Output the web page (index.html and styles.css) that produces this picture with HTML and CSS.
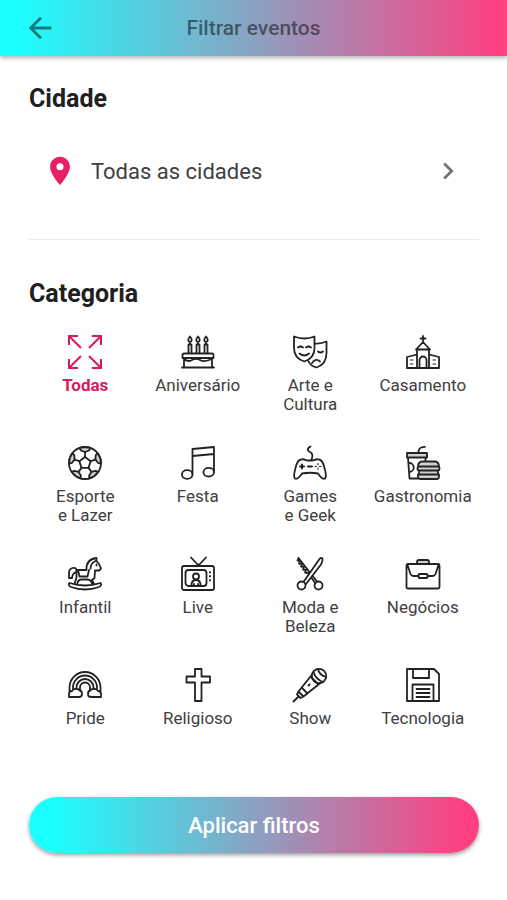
FILE: index.html
```html
<!DOCTYPE html>
<html lang="pt-BR">
<head>
<meta charset="utf-8">
<meta name="viewport" content="width=device-width, initial-scale=1">
<title>Filtrar eventos</title>
<link rel="stylesheet" href="styles.css">
</head>
<body>
<header class="topbar">
  <button class="back" type="button" aria-label="Voltar"><svg class="glyph" viewBox="0 0 24 24"><path d="M20 11H7.83l5.59-5.59L12 4l-8 8 8 8 1.41-1.41L7.83 13H20v-2z"/></svg></button>
  <h1 class="title">Filtrar eventos</h1>
</header>
<main class="content">
  <section class="city">
    <h2 class="heading">Cidade</h2>
    <button class="picker" type="button">
      <svg class="glyph pin" viewBox="0 0 24 24"><path d="M12 2C8.13 2 5 5.13 5 9c0 5.25 7 13 7 13s7-7.75 7-13c0-3.87-3.13-7-7-7zm0 9.500a2.500 2.500 0 0 1 0-5 2.500 2.500 0 0 1 0 5z"/></svg>
      <span class="picker-label">Todas as cidades</span>
      <svg class="glyph chevron" viewBox="0 0 24 24"><path d="M10 6 8.590 7.410 13.170 12l-4.580 4.590L10 18l6-6z"/></svg>
    </button>
  </section>
  <section class="categories">
    <h2 class="heading">Categoria</h2>
    <div class="grid">
      <button class="cat selected" type="button">
        <svg class="icon" viewBox="0 0 34 34"><path d="M1 10V1h9M1 1l12 12M24 1h9v9M33 1 21 13M1 24v9h9M1 33l12-12M24 33h9v-9M33 33 21 21"/></svg>
        <span>Todas</span>
      </button>
      <button class="cat" type="button">
        <svg class="icon" viewBox="0 0 34 34"><path d="M1 32.500h32M3 32V23M31 32V23M3 18.500h28q1.500 0 1.500 1.500v3h-31v-3q0-1.500 1.500-1.500zM3 24q4 3.500 8 1t8 0 12-1M7.500 18.500v-9h3v9M15.500 18.500v-9h3v9M23.500 18.500v-9h3v9M9 9V7M17 9V7M25 9V7M9 1.500q-3.500 4 0 5.500 3.500-1.500 0-5.500zM17 1.500q-3.500 4 0 5.500 3.500-1.500 0-5.500zM25 1.500q-3.500 4 0 5.500 3.500-1.500 0-5.500z"/></svg>
        <span>Aniversário</span>
      </button>
      <button class="cat" type="button">
        <svg class="icon" viewBox="0 0 34 34"><path d="M1 1.500q10.500 4 20.500 0V13c0 7-4 11.500-10.200 13.500C5 24.500 1 20 1 13zM22 8.500q6 .5 11.500-2V18c0 8-4 12.500-10 14.500-4-1-7-3.500-8.500-7M5 12.500q2.500-2 5 0M13 12.500q2.500-2 5 0M6.500 18.500q4.700 4 9.500 0M25 16.500q2.500 2 5 0M19 28q4-5.500 8-1.500"/></svg>
        <span>Arte e<br>Cultura</span>
      </button>
      <button class="cat" type="button">
        <svg class="icon" viewBox="0 0 34 34"><path d="M17 1v6M14.500 3.500h5M17 7l-6 6.500V33M17 7l6 6.500V33M10 14.500h14M11 19.500 1 22v11h32V22l-10-2.500M13.500 33v-8a3.500 3.500 0 0 1 7 0v8"/><path class="thin" d="M4.500 25h2.500M4.500 29h2.500M27 25h2.500M27 29h2.500"/></svg>
        <span>Casamento</span>
      </button>
      <button class="cat" type="button">
        <svg class="icon" viewBox="0 0 34 34"><circle cx="17" cy="17" r="16"/><g id="panel"><path class="shade" d="M11.500 2l1.500 2.500 4 1.500 4-1.500L22.500 2 17 1z"/><path d="M17 6V11L22.700 15.200"/></g><use href="#panel" transform="rotate(72 17 17)"/><use href="#panel" transform="rotate(144 17 17)"/><use href="#panel" transform="rotate(216 17 17)"/><use href="#panel" transform="rotate(288 17 17)"/></svg>
        <span>Esporte<br>e Lazer</span>
      </button>
      <button class="cat" type="button">
        <svg class="icon" viewBox="0 0 34 34"><path d="M11.500 28V3L33 1v25M11.500 10 33 8"/><ellipse cx="6.200" cy="28.500" rx="5.300" ry="4.300"/><ellipse cx="27.700" cy="26.200" rx="5.300" ry="4.300"/></svg>
        <span>Festa</span>
      </button>
      <button class="cat" type="button">
        <svg class="icon" viewBox="0 0 34 34"><path d="M17.500.5c-4 2-3 4.500-.5 5.500s3 4 1.500 8M8 13.500c-3.500.5-4.500 4-5.500 8.500-1 4-2.500 8.500-.5 10.500 2.500 1.500 5-2 7-5q8-1.500 16 0c2 3 4.500 6.500 7 5 2-2 .5-6.500-.5-10.500-1-4.500-2-8-5.500-8.500-4-1-4 1-7 1h-4c-3 0-3-2-7-1z"/><path class="bold" d="M9 18.500v4M7 20.500h4M15 20.500h4"/><path class="thin" d="M25 17.500v1.500M25 22v1.500M22 20.500h1.500M26.500 20.500h1.500"/></svg>
        <span>Games<br>e Geek</span>
      </button>
      <button class="cat" type="button">
        <svg class="icon" viewBox="0 0 34 34"><path d="M19 .8q-5 0-6 3l-1 3.500M2 11.500 3.500 32.500H12M19.500 11.500V15M3 17a4.500 4.500 0 0 1 .5 9"/><path class="shade" d="M1 7h20v4.500H1zM12 20.500q0-5 5-5h11q5 0 5 5zM13 20.500h19q1.500 0 1.500 2t-1.500 2H13q-1.500 0-1.500-2t1.500-2zM13 24.500h19v4H13zM12 28.500h21v2q0 2.500-2.500 2.500h-16q-2.500 0-2.500-2.500z"/></svg>
        <span>Gastronomia</span>
      </button>
      <button class="cat" type="button">
        <svg class="icon" viewBox="0 0 34 34"><path d="M1.500 26q15.500 5 31 0 2 2-1.500 4-14 5-28 0-3.500-2-1.500-4zM6.500 27l2-6.500V14q0-4-4-3Q1 12 1 16v5h3q0-4 4.500-6.500M9 13h9.500c-.5-7 2-11 10-12v3l2.500 3 2 4.500-1.500 2h-4.500l-.5 7.500-2.500 2 2 4M22.500 11.500c0-4 2-6 5-7.500M10 13l1.500 6.500h8l1.500-6.500M9.500 26.500q0-3.500 4-4h6q4 .5 4.500 4M28.500 7.500v1"/></svg>
        <span>Infantil</span>
      </button>
      <button class="cat" type="button">
        <svg class="icon" viewBox="0 0 34 34"><path d="m10 .5 7.500 8 7.500-8M14.500 9q3-3 6 0"/><rect x="1" y="9" width="32" height="24" rx="2"/><rect x="4.500" y="13" width="21" height="16" rx="3"/><circle cx="15" cy="19.500" r="3"/><path d="M10.500 28.500c0-4 2-5.500 4.500-5.500s4.500 1.500 4.500 5.500M13 28.500v-1.500M17 28.500v-1.500M29 15v.5M29 19v.5M29 23v.5"/></svg>
        <span>Live</span>
      </button>
      <button class="cat" type="button">
        <svg class="icon" viewBox="0 0 34 34"><path d="M5.500 1 4.500 3.500 7 4 6 6.500l3 .5-1 2.500 3 .5-1 2.500 3 .5-1 2.500 3 .5 7.500 10.500M5.500 1 24 24.500"/><path class="blade" d="M10.500 25 26.500 2q1.500-2 3-.5.5 2.500-1.500 6L13 27"/><circle cx="8.500" cy="28.500" r="4"/><circle cx="25.500" cy="28.500" r="4"/></svg>
        <span>Moda e<br>Beleza</span>
      </button>
      <button class="cat" type="button">
        <svg class="icon" viewBox="0 0 34 34"><path class="shade" d="M11 7V5q0-2 2-2h8q2 0 2 2v2z"/><path d="M2 7h30q1.500 0 1.500 1.500v21.500q0 1.500-1.500 1.500H2Q.5 31.500.5 30V8.500Q.5 7 2 7zM1.500 8l3 9q.8 2 3 2h5M32.500 8l-3 9q-.8 2-3 2h-5"/><rect x="12.500" y="17" width="9" height="4" rx="1"/></svg>
        <span>Negócios</span>
      </button>
      <button class="cat" type="button">
        <svg class="icon" viewBox="0 0 34 34"><path d="M1.500 23v-3.500a15.500 15.500 0 0 1 31 0V23M5 21.500v-2a12 12 0 0 1 24 0v2M8.500 21v-1.500a8.500 8.500 0 0 1 17 0V21M12 22v-2.500a5 5 0 0 1 10 0V22M1 29v-3q0-3 3-3 1.500-2.500 4-2 2.500-.5 3.500 1.500 2.500 0 2.500 3.500 0 3-3 3zM33 29v-3q0-3-3-3-1.500-2.500-4-2-2.500-.5-3.500 1.500-2.500 0-2.500 3.500 0 3 3 3z"/></svg>
        <span>Pride</span>
      </button>
      <button class="cat" type="button">
        <svg class="icon" viewBox="0 0 34 34"><path d="M14 1h6.500v7.500H29V14.500h-8.500V33H14V14.500H5.500V8.500H14z"/></svg>
        <span>Religioso</span>
      </button>
      <button class="cat" type="button">
        <svg class="icon" viewBox="0 0 34 34"><circle cx="26" cy="8" r="7.200"/><path d="M19 6.500 17.500 8.500l8 8 2-1.500M20.500 4q2 7 9.500 10M25 1q1 6 8 8M17.500 8.500 5.500 23.500l5 5 15-12M5.500 23.500l-1.500 3 3.500 3.500 3-1.500M5 29l-4.500 4.500M9 20l5.500 5.500M15.500 17.500l1-1"/></svg>
        <span>Show</span>
      </button>
      <button class="cat" type="button">
        <svg class="icon" viewBox="0 0 34 34"><path d="M1 1h27l5 5v27H1zM7 1v9h16V1M6.500 33V16.500h21V33M10.500 21h13M10.500 25h13M10.500 29h13"/></svg>
        <span>Tecnologia</span>
      </button>
    </div>
  </section>
  <button class="apply" type="button">Aplicar filtros</button>
</main>
</body>
</html>
```
FILE: styles.css
```css
* {
  box-sizing: border-box;
}

body {
  margin: 0;
  background: #fff;
  color: #202020;
  font-family: Roboto, "Liberation Sans", sans-serif;
}

button {
  border: 0;
  padding: 0;
  background: none;
  color: inherit;
  font: inherit;
  cursor: pointer;
}

.topbar {
  display: grid;
  grid-template-columns: 34px 1fr 34px;
  align-items: center;
  height: 56px;
  padding: 0 23px;
  background: linear-gradient(90deg, #1bffff 3%, #ff4081 99%);
  box-shadow: 0 2px 4px rgba(0, 0, 0, 0.3);
  color: rgba(0, 0, 0, 0.5);
}

.back {
  height: 34px;
}

.title {
  margin: 0;
  font-size: 21px;
  font-weight: 500;
  line-height: 28px;
  text-align: center;
}

.glyph {
  display: block;
  flex: none;
  width: 34px;
  height: 34px;
  fill: currentColor;
}

.content {
  padding: 29px 28px 28px 29px;
}

.heading {
  margin: 0;
  font-size: 25px;
  font-weight: 700;
  line-height: 28px;
}

.city {
  padding-bottom: 32px;
  border-bottom: 1px solid #ececec;
}

.picker {
  display: flex;
  align-items: center;
  gap: 14px;
  width: 100%;
  height: 72px;
  margin-top: 22px;
  padding: 0 14px;
}

.picker-label {
  flex: 1;
  color: #404040;
  font-size: 22px;
  text-align: left;
}

.pin {
  color: #e91e63;
}

.chevron {
  color: #757575;
}

.categories {
  padding-top: 40px;
}

.grid {
  display: grid;
  grid-template-columns: repeat(4, 1fr);
  grid-auto-rows: 111px;
  margin-top: 27px;
}

.cat {
  display: flex;
  flex-direction: column;
  align-items: center;
  gap: 7px;
  color: #404040;
  font-size: 17px;
  line-height: 19px;
  text-align: center;
}

.selected {
  color: #d81b60;
  font-weight: 700;
}

.icon {
  display: block;
  width: 34px;
  height: 34px;
  overflow: visible;
  fill: none;
  stroke: #222;
  stroke-width: 1.8;
  stroke-linejoin: round;
  stroke-linecap: round;
}

.selected .icon {
  stroke: currentColor;
  stroke-width: 2;
  stroke-linejoin: miter;
  stroke-linecap: butt;
}

.icon .shade {
  fill: #d0d0d0;
}

.icon .blade {
  fill: #fff;
}

.icon .bold {
  stroke-width: 2;
}

.icon .thin {
  stroke-width: 1;
}

.apply {
  display: block;
  width: 100%;
  height: 56px;
  margin-top: 18px;
  border-radius: 28px;
  background: linear-gradient(90deg, #1bffff 5%, #ff4081 97%);
  box-shadow: 0 2px 4px rgba(0, 0, 0, 0.4);
  color: #fff;
  font-size: 22px;
  font-weight: 500;
}
```
